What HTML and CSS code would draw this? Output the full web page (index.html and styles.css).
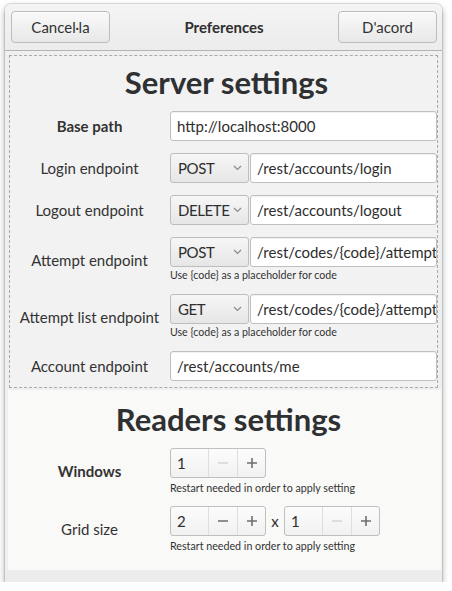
FILE: index.html
```html
<!DOCTYPE html>
<html>
<head>
<meta charset="utf-8">
<link rel="stylesheet" href="styles.css">
</head>
<body>
<div class="window">
  <header class="headerbar">
    <button class="btn">Cancel·la</button>
    <div class="title">Preferences</div>
    <button class="btn">D'acord</button>
  </header>
  <div class="content">
    <section class="server">
      <h1 class="heading">Server settings</h1>
      <div class="form">
        <div class="label bold">Base path</div>
        <div class="ctrl"><div class="entry">http://localhost:8000</div></div>

        <div class="label">Login endpoint</div>
        <div class="ctrl">
          <div class="pair">
            <div class="combo"><span>POST</span><svg class="chev" width="9" height="6" viewBox="0 0 9 6"><path d="M1 1l3.5 3.5L8 1" fill="none" stroke="#8a8a8a" stroke-width="1.2"/></svg></div>
            <div class="entry">/rest/accounts/login</div>
          </div>
        </div>

        <div class="label">Logout endpoint</div>
        <div class="ctrl">
          <div class="pair">
            <div class="combo"><span>DELETE</span><svg class="chev" width="9" height="6" viewBox="0 0 9 6"><path d="M1 1l3.5 3.5L8 1" fill="none" stroke="#8a8a8a" stroke-width="1.2"/></svg></div>
            <div class="entry">/rest/accounts/logout</div>
          </div>
        </div>

        <div class="label">Attempt endpoint</div>
        <div class="ctrl">
          <div class="pair">
            <div class="combo"><span>POST</span><svg class="chev" width="9" height="6" viewBox="0 0 9 6"><path d="M1 1l3.5 3.5L8 1" fill="none" stroke="#8a8a8a" stroke-width="1.2"/></svg></div>
            <div class="entry">/rest/codes/{code}/attempt</div>
          </div>
          <div class="hint">Use {code} as a placeholder for code</div>
        </div>

        <div class="label">Attempt list endpoint</div>
        <div class="ctrl">
          <div class="pair">
            <div class="combo"><span>GET</span><svg class="chev" width="9" height="6" viewBox="0 0 9 6"><path d="M1 1l3.5 3.5L8 1" fill="none" stroke="#8a8a8a" stroke-width="1.2"/></svg></div>
            <div class="entry">/rest/codes/{code}/attempt</div>
          </div>
          <div class="hint">Use {code} as a placeholder for code</div>
        </div>

        <div class="label">Account endpoint</div>
        <div class="ctrl"><div class="entry">/rest/accounts/me</div></div>
      </div>
    </section>

    <section class="readers">
      <h1 class="heading">Readers settings</h1>
      <div class="form">
        <div class="label bold">Windows</div>
        <div class="ctrl">
          <div class="spin">
            <div class="spin-val">1</div>
            <div class="spin-btn off"><svg width="12" height="12" viewBox="0 0 12 12"><path d="M1 6h10" stroke="currentColor" stroke-width="1.6"/></svg></div>
            <div class="spin-btn"><svg width="12" height="12" viewBox="0 0 12 12"><path d="M1 6h10M6 1v10" stroke="currentColor" stroke-width="1.6"/></svg></div>
          </div>
          <div class="hint r">Restart needed in order to apply setting</div>
        </div>

        <div class="label">Grid size</div>
        <div class="ctrl">
          <div class="spins">
            <div class="spin">
              <div class="spin-val">2</div>
              <div class="spin-btn"><svg width="12" height="12" viewBox="0 0 12 12"><path d="M1 6h10" stroke="currentColor" stroke-width="1.6"/></svg></div>
              <div class="spin-btn"><svg width="12" height="12" viewBox="0 0 12 12"><path d="M1 6h10M6 1v10" stroke="currentColor" stroke-width="1.6"/></svg></div>
            </div>
            <span class="times">x</span>
            <div class="spin">
              <div class="spin-val">1</div>
              <div class="spin-btn off"><svg width="12" height="12" viewBox="0 0 12 12"><path d="M1 6h10" stroke="currentColor" stroke-width="1.6"/></svg></div>
              <div class="spin-btn"><svg width="12" height="12" viewBox="0 0 12 12"><path d="M1 6h10M6 1v10" stroke="currentColor" stroke-width="1.6"/></svg></div>
            </div>
          </div>
          <div class="hint r">Restart needed in order to apply setting</div>
        </div>
      </div>
    </section>
    <div class="band"></div>
  </div>
</div>
</body>
</html>
```

FILE: styles.css
```css
* { box-sizing: border-box; }
html, body { margin: 0; padding: 0; background: #ffffff; }
body {
  font-family: "Lato", "Open Sans", sans-serif;
  font-size: 15px;
  color: #333333;
}
.window {
  margin: 4px 0 0 5px;
  width: 437px;
  height: 578px;
  background: #efefef;
  border-radius: 6px 6px 0 0;
  box-shadow: 0 0 0 1px rgba(0,0,0,0.10), 0 3px 7px rgba(0,0,0,0.35);
  display: flex;
  flex-direction: column;
  overflow: hidden;
}
.headerbar {
  height: 47px;
  flex: none;
  display: flex;
  align-items: flex-start;
  justify-content: space-between;
  padding: 7px 5px 0 6px;
  background: linear-gradient(#f4f4f4, #ececec);
  border-bottom: 1px solid #b4b4b2;
}
.btn {
  width: 99px;
  height: 32px;
  font: inherit;
  font-size: 15px;
  color: #333333;
  border: 1px solid #bdbdbd;
  border-radius: 4px;
  background: linear-gradient(#f9f9f9, #e8e8e8);
  box-shadow: inset 0 1px 0 #ffffff;
  padding: 0;
}
.title {
  font-weight: bold;
  font-size: 15px;
  line-height: 32px;
  color: #2e2e2e;
}
.content {
  flex: 1;
  display: flex;
  flex-direction: column;
}
.server {
  margin: 4px 4px 0 4px;
  border: 1px dashed #a9a9a9;
  padding: 8px 0 6px 6px;
  background: #f2f2f2;
}
.heading {
  margin: 0 0 11px 0;
  font-size: 31px;
  line-height: 36px;
  font-weight: bold;
  text-align: center;
  color: #2e3032;
}
.form {
  display: grid;
  grid-template-columns: 147px 1fr;
  column-gap: 7px;
  row-gap: 12px;
  align-items: center;
}
.label {
  text-align: center;
  white-space: nowrap;
}
.bold { font-weight: bold; }
.ctrl { min-width: 0; }
.entry {
  height: 30px;
  line-height: 28px;
  border: 1px solid #bfbfbf;
  border-radius: 3px;
  background: #ffffff;
  box-shadow: inset 0 1px 1px rgba(0,0,0,0.06);
  padding: 0 4px 0 6px;
  white-space: nowrap;
  overflow: hidden;
  color: #2e2e2e;
}
.pair {
  display: flex;
  gap: 1px;
}
.pair .entry { flex: 1; min-width: 0; }
.combo {
  width: 79px;
  height: 30px;
  flex: none;
  border: 1px solid #bdbdbd;
  border-radius: 3px;
  background: linear-gradient(#f6f6f6, #e6e6e6);
  display: flex;
  align-items: center;
  justify-content: space-between;
  padding: 0 6px 0 7px;
  color: #2e2e2e;
  letter-spacing: -0.4px;
}
.chev { flex: none; margin-left: 3px; }
.hint {
  font-size: 10.6px;
  line-height: 13px;
  margin-top: 2px;
  color: #333;
}
.hint.r { margin-top: 3px; font-size: 10.7px; }
.readers {
  margin: 2px 1px 0 3px;
  background: #f9f9f8;
  padding: 11px 0 0 8px;
  flex: 1;
}
.spins {
  display: flex;
  align-items: center;
}
.times {
  width: 18px;
  text-align: center;
  color: #2e2e2e;
}
.spin {
  display: flex;
  width: 96px;
  height: 30px;
  border: 1px solid #bfbfbf;
  border-radius: 3px;
  background: linear-gradient(#fcfcfc, #f1f1f1);
  overflow: hidden;
}
.spin-val {
  width: 38px;
  line-height: 28px;
  padding-left: 6px;
  border-right: 1px solid #dedede;
  color: #2e2e2e;
}
.spin-btn {
  width: 28px;
  display: flex;
  align-items: center;
  justify-content: center;
  color: #6e6e6e;
}
.spin-btn + .spin-btn { border-left: 1px solid #dedede; }
.spin-btn.off { color: #d4d4d4; }
.band {
  height: 12px;
  flex: none;
  background: #ececec;
}
```
